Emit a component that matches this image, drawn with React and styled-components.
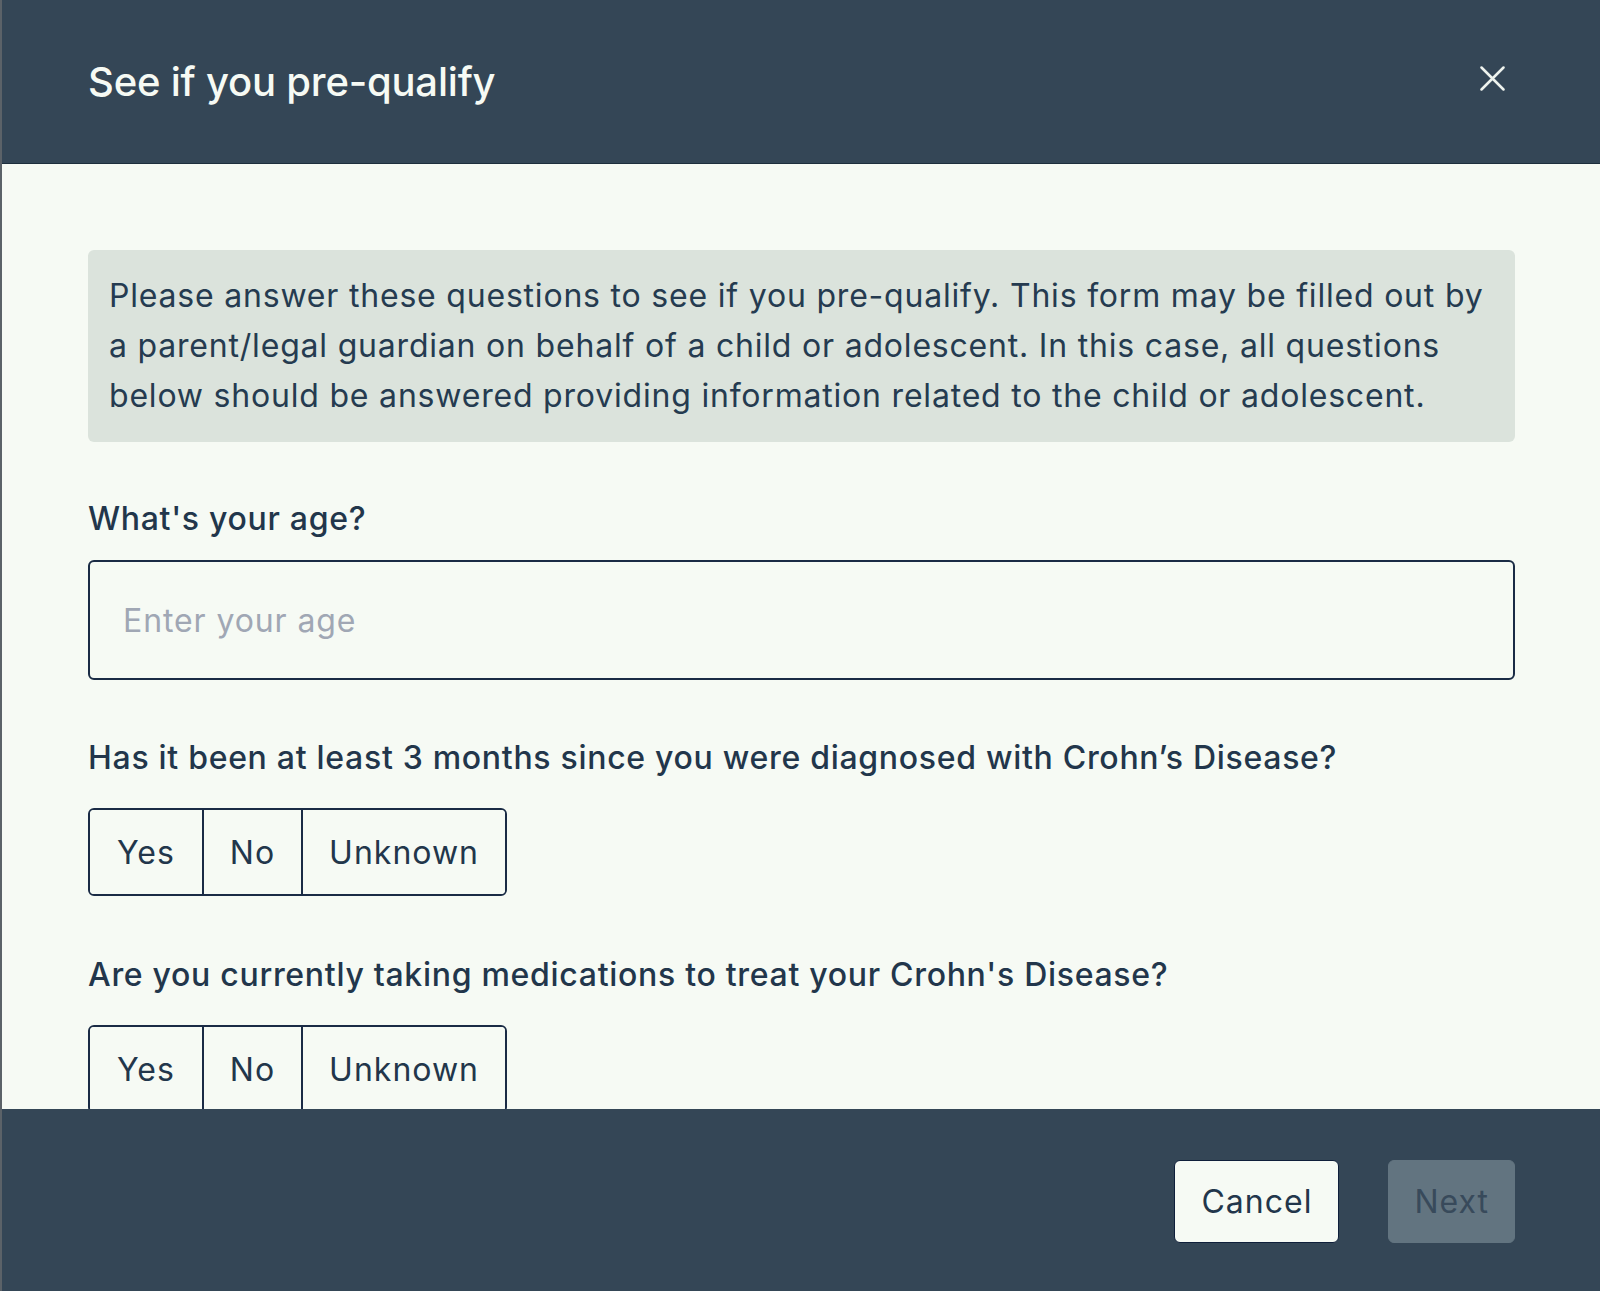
import React, {useState} from "react";
import styled, {createGlobalStyle} from "styled-components";

const GlobalStyle = createGlobalStyle`
  html, body {
    margin: 0;
    padding: 0;
    height: 100%;
    background: #f6faf4;
  }
  body {
    font-family: Inter, "Noto Sans", "Liberation Sans", sans-serif;
    -webkit-font-smoothing: antialiased;
  }
  * {
    box-sizing: border-box;
  }
`;

const Modal = styled.div`
  height: 100vh;
  display: flex;
  flex-direction: column;
  background: #f6faf4;
  border-left: 2px solid #5b6268;
  overflow: hidden;
`;

const Header = styled.header`
  flex: 0 0 164px;
  display: flex;
  align-items: center;
  justify-content: space-between;
  padding: 0 88px 6px 86px;
  background: #344656;
  border-bottom: 1px solid #1d2e3c;
`;

const Title = styled.h2`
  margin: 6px 0 0 0;
  color: #f6faf4;
  font-size: 40px;
  font-weight: 500;
  letter-spacing: -0.2px;
`;

const CloseButton = styled.button`
  width: 40px;
  height: 40px;
  display: flex;
  align-items: center;
  justify-content: center;
  padding: 0;
  background: none;
  border: none;
  color: #eef3ee;
  cursor: pointer;
`;

const Body = styled.main`
  flex: 1;
  overflow: hidden;
  padding: 86px 85px 0 86px;
`;

const Notice = styled.p`
  margin: 0 0 57px 0;
  padding: 21px 18px 21px 21px;
  background: #dbe3dc;
  border-radius: 6px;
  color: #253b50;
  font-size: 32px;
  line-height: 50px;
  letter-spacing: 0.8px;
`;

const Field = styled.div`
  display: flex;
  flex-direction: column;
  gap: ${props => props.$gap}px;
  margin-bottom: ${props => props.$after}px;
`;

const Label = styled.label`
  color: #22364b;
  font-size: 32px;
  font-weight: 500;
  line-height: 40px;
  letter-spacing: 0.7px;
`;

const Input = styled.input`
  height: 120px;
  padding: 0 33px;
  border: 2px solid #1a2b45;
  border-radius: 6px;
  background: #f6faf4;
  color: #22364b;
  font-family: inherit;
  font-size: 32px;
  letter-spacing: 0.9px;
  outline: none;

  &::placeholder {
    color: #a0a7b4;
  }
`;

const Choices = styled.div`
  display: inline-flex;
  align-self: flex-start;
  border: 2px solid #1a2b45;
  border-radius: 6px;
  overflow: hidden;
`;

const Choice = styled.button`
  height: 84px;
  padding: 0 ${props => props.$pad}px;
  background: ${props => (props.$active ? "#dbe3dc" : "#f6faf4")};
  border: none;
  border-left: 2px solid #1a2b45;
  color: #22364b;
  font-family: inherit;
  font-size: 32px;
  letter-spacing: 1px;
  cursor: pointer;

  &:first-child {
    border-left: none;
  }
`;

const Footer = styled.footer`
  flex: 0 0 182px;
  display: flex;
  justify-content: flex-end;
  align-items: flex-start;
  gap: 49px;
  padding: 51px 85px 0 0;
  background: #344656;
`;

const Button = styled.button`
  height: 83px;
  padding: 0 ${props => props.$pad}px;
  border-radius: 6px;
  border: 1px solid ${props => (props.$disabled ? "#627480" : "#0f1f3a")};
  background: ${props => (props.$disabled ? "#627480" : "#f6faf4")};
  color: ${props => (props.$disabled ? "#384a5b" : "#22364b")};
  font-family: inherit;
  font-size: 32px;
  letter-spacing: 1px;
  cursor: ${props => (props.$disabled ? "default" : "pointer")};
`;

const CloseIcon = () => (
    <svg width="25" height="25" viewBox="0 0 25 25" fill="none">
        <path d="M1.5 1.5 L23.5 23.5 M23.5 1.5 L1.5 23.5" stroke="currentColor" strokeWidth="2.5" strokeLinecap="round"/>
    </svg>
);

const options = [
    {label: "Yes", pad: 27},
    {label: "No", pad: 26},
    {label: "Unknown", pad: 26}
];

const ChoiceGroup = ({value, onChange}) => (
    <Choices>
        {options.map(o => (
            <Choice key={o.label} $pad={o.pad} $active={value === o.label} onClick={() => onChange(o.label)}>
                {o.label}
            </Choice>
        ))}
    </Choices>
);

const App = () => {
    const [age, setAge] = useState("");
    const [diagnosed, setDiagnosed] = useState(null);
    const [medications, setMedications] = useState(null);

    return (
        <Modal>
            <GlobalStyle/>
            <Header>
                <Title>See if you pre-qualify</Title>
                <CloseButton aria-label="Close"><CloseIcon/></CloseButton>
            </Header>
            <Body>
                <Notice>
                    Please answer these questions to see if you pre-qualify. This form may be filled out by a
                    parent/legal guardian on behalf of a child or adolescent. In this case, all questions below
                    should be answered providing information related to the child or adolescent.
                </Notice>
                <Field $gap={21} $after={58}>
                    <Label htmlFor="age">What's your age?</Label>
                    <Input id="age" placeholder="Enter your age" value={age} onChange={e => setAge(e.target.value)}/>
                </Field>
                <Field $gap={30} $after={59}>
                    <Label>Has it been at least 3 months since you were diagnosed with Crohn’s Disease?</Label>
                    <ChoiceGroup value={diagnosed} onChange={setDiagnosed}/>
                </Field>
                <Field $gap={30} $after={0}>
                    <Label>Are you currently taking medications to treat your Crohn's Disease?</Label>
                    <ChoiceGroup value={medications} onChange={setMedications}/>
                </Field>
            </Body>
            <Footer>
                <Button $pad={26}>Cancel</Button>
                <Button $pad={25} $disabled>Next</Button>
            </Footer>
        </Modal>
    );
};

export default App;
